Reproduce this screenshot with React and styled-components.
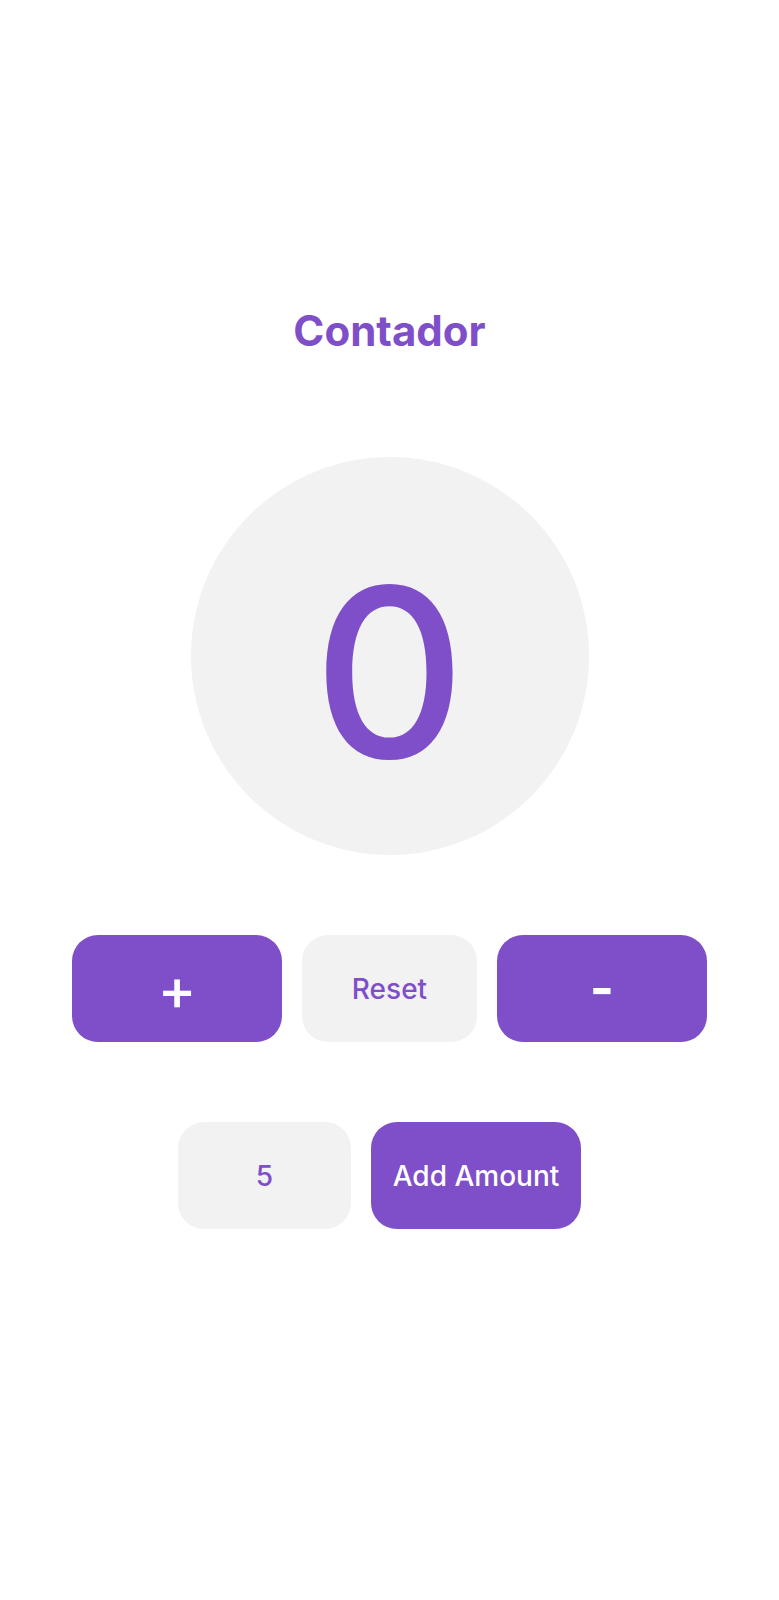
import React, { useState } from "react";
import styled, { createGlobalStyle } from "styled-components";

const PURPLE = "#7f4fc9";
const GRAY = "#f2f2f2";

const GlobalStyle = createGlobalStyle`
  body {
    margin: 0;
    background: #ffffff;
    font-family: Inter, "Liberation Sans", Arial, sans-serif;
  }
`;

const Page = styled.div`
  min-height: 1600px;
  display: flex;
  flex-direction: column;
  align-items: center;
  padding-top: 310px;
  box-sizing: border-box;
`;

const Title = styled.h1`
  margin: 0;
  font-size: 42px;
  line-height: 1;
  font-weight: 700;
  color: ${PURPLE};
`;

const Display = styled.div`
  margin-top: 105px;
  width: 398px;
  height: 398px;
  box-sizing: border-box;
  padding-top: 32px;
  border-radius: 50%;
  background: ${GRAY};
  display: flex;
  align-items: center;
  justify-content: center;
  color: ${PURPLE};
  font-size: 236px;
  font-weight: 500;
  line-height: 1;
`;

const Row = styled.div`
  display: flex;
  gap: 20px;
  margin-top: ${(p) => p.$top}px;
  margin-right: ${(p) => p.$shift || 0}px;
`;

const Button = styled.button`
  width: ${(p) => p.$width}px;
  height: 107px;
  border: none;
  border-radius: 26px;
  background: ${(p) => (p.$ghost ? GRAY : PURPLE)};
  color: ${(p) => (p.$ghost ? PURPLE : "#ffffff")};
  font-family: inherit;
  font-size: ${(p) => p.$size || 28}px;
  font-weight: ${(p) => p.$weight || 500};
  display: flex;
  align-items: center;
  justify-content: center;
  cursor: pointer;
`;

const AmountInput = styled.input`
  width: 173px;
  height: 107px;
  box-sizing: border-box;
  border: none;
  border-radius: 26px;
  background: ${GRAY};
  color: ${PURPLE};
  font-family: inherit;
  font-size: 28px;
  font-weight: 500;
  text-align: center;
  outline: none;
`;

export default function App() {
  const [count, setCount] = useState(0);
  const [amount, setAmount] = useState("5");

  return (
    <>
      <GlobalStyle />
      <Page>
        <Title>Contador</Title>
        <Display>{count}</Display>
        <Row $top={80}>
          <Button
            $width={210}
            $size={58}
            $weight={500}
            onClick={() => setCount(count + 1)}
          >
            +
          </Button>
          <Button $width={175} $ghost onClick={() => setCount(0)}>
            Reset
          </Button>
          <Button
            $width={210}
            $size={52}
            $weight={700}
            onClick={() => setCount(count - 1)}
          >
            -
          </Button>
        </Row>
        <Row $top={80} $shift={20}>
          <AmountInput
            value={amount}
            onChange={(e) => setAmount(e.target.value)}
          />
          <Button
            $width={210}
            onClick={() => setCount(count + (parseInt(amount, 10) || 0))}
          >
            Add Amount
          </Button>
        </Row>
      </Page>
    </>
  );
}
